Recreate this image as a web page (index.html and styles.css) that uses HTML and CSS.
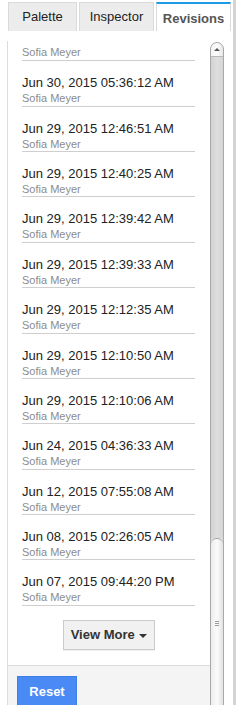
FILE: index.html
```html
<!DOCTYPE html>
<html lang="en">
<head>
	<meta charset="UTF-8">
	<meta name="viewport" content="width=device-width, initial-scale=1.0">
	<title>Revisions</title>
	<link rel="stylesheet" href="styles.css">
</head>
<body>

<div class="page">

	<!-- Sidebar tabs -->
	<div class="tabs">
		<div class="tab">Palette</div>
		<div class="tab">Inspector</div>
		<div class="tab active">Revisions</div>
	</div>

	<div class="main">
		<div class="panel">
			<div class="list">
				<!-- first entry is scrolled half out of view -->
				<div class="item item-cut">
					<div class="author">Sofia Meyer</div>
				</div>
				<div class="item">
					<div class="date">Jun 30, 2015 05:36:12 AM</div>
					<div class="author">Sofia Meyer</div>
				</div>
				<div class="item">
					<div class="date">Jun 29, 2015 12:46:51 AM</div>
					<div class="author">Sofia Meyer</div>
				</div>
				<div class="item">
					<div class="date">Jun 29, 2015 12:40:25 AM</div>
					<div class="author">Sofia Meyer</div>
				</div>
				<div class="item">
					<div class="date">Jun 29, 2015 12:39:42 AM</div>
					<div class="author">Sofia Meyer</div>
				</div>
				<div class="item">
					<div class="date">Jun 29, 2015 12:39:33 AM</div>
					<div class="author">Sofia Meyer</div>
				</div>
				<div class="item">
					<div class="date">Jun 29, 2015 12:12:35 AM</div>
					<div class="author">Sofia Meyer</div>
				</div>
				<div class="item">
					<div class="date">Jun 29, 2015 12:10:50 AM</div>
					<div class="author">Sofia Meyer</div>
				</div>
				<div class="item">
					<div class="date">Jun 29, 2015 12:10:06 AM</div>
					<div class="author">Sofia Meyer</div>
				</div>
				<div class="item">
					<div class="date">Jun 24, 2015 04:36:33 AM</div>
					<div class="author">Sofia Meyer</div>
				</div>
				<div class="item">
					<div class="date">Jun 12, 2015 07:55:08 AM</div>
					<div class="author">Sofia Meyer</div>
				</div>
				<div class="item">
					<div class="date">Jun 08, 2015 02:26:05 AM</div>
					<div class="author">Sofia Meyer</div>
				</div>
				<div class="item">
					<div class="date">Jun 07, 2015 09:44:20 PM</div>
					<div class="author">Sofia Meyer</div>
				</div>
			</div>

			<div class="more">
				<button class="more-btn">View More <span class="caret"></span></button>
			</div>

			<div class="footer">
				<button class="reset-btn">Reset</button>
			</div>
		</div>

		<!-- scrollbar of the panel -->
		<div class="scrollbar">
			<div class="scroll-up"><span class="arrow-up"></span></div>
			<div class="scroll-track"></div>
			<div class="scroll-thumb">
				<div class="grip"></div>
			</div>
		</div>
	</div>

</div>

</body>
</html>
```

FILE: styles.css
```css
	html, body {
		margin: 0;
		padding: 0;
		height: 705px;
		overflow: hidden;
		}

	body {
		background-color: white;
		font-family: "Liberation Sans", Arial, sans-serif;
		color: #222;
		}

	.page {
		width: 236px;
		height: 705px;
		box-sizing: border-box;
		border-right: 3px solid #d4d4d4; /* window edge */
		}

	.tabs {
		display: flex;
		gap: 2px;
		padding: 2px 0 0 8px;
		height: 31px;
		box-sizing: border-box;
		}

	.tab {
		width: 69px;
		height: 29px;
		box-sizing: border-box;
		background-color: #ececec;
		border: 1px solid #dadada;
		border-bottom: none;
		font-size: 13px;
		line-height: 27px;
		text-align: center;
		color: #222;
		}

	.tab:nth-child(2) {
		width: 75px;
		}

	.tab.active {
		width: 75px;
		background-color: white;
		border-top: 2px solid #1b9bea;
		font-weight: bold;
		color: #555;
		line-height: 29px;
		}

	.main {
		display: flex;
		margin: 10px 0 0 7px;
		}

	.panel {
		width: 203px;
		box-sizing: border-box;
		border-left: 1px solid #dcdcdc;
		}

	.list {
		padding: 0 15px 0 14px;
		}

	.item {
		padding: 13px 0 0.36px;
		border-bottom: 1px solid #cfcfcf;
		}

	.item-cut {
		padding-top: 4px;
		padding-bottom: 1.4px;
		}

	.date {
		font-size: 13px;
		line-height: 17px;
		color: #222;
		}

	.author {
		font-size: 11px;
		line-height: 14px;
		color: #8c8c8c;
		}

	.more {
		padding: 14px 0 15px;
		text-align: center;
		}

	.more-btn {
		width: 92px;
		height: 30px;
		background-color: #f1f1f1;
		border: 1px solid #cbcbcb;
		box-shadow: 0 1px 0 rgba(0, 0, 0, 0.06);
		font-family: inherit;
		font-size: 13px;
		font-weight: bold;
		color: #333;
		padding: 0;
		}

	.caret {
		display: inline-block;
		width: 0;
		height: 0;
		border-left: 4px solid transparent;
		border-right: 4px solid transparent;
		border-top: 4px solid #333;
		vertical-align: middle;
		margin-left: 1px;
		}

	.footer {
		background-color: #f4f4f4;
		border-top: 1px solid #dcdcdc;
		padding: 10px 9px;
		}

	.reset-btn {
		width: 60px;
		height: 32px;
		background-color: #4a8af4;
		border: 1px solid #3d7fe6;
		color: white;
		font-family: inherit;
		font-size: 13px;
		font-weight: bold;
		padding: 0;
		}

	.scrollbar {
		display: flex;
		flex-direction: column;
		width: 14px;
		height: 680px;
		margin-top: 1px;
		box-sizing: border-box;
		border: 1px solid #a9a9a9;
		border-radius: 7px 7px 0 0;
		background-color: #dcdcdc;
		overflow: hidden;
		}

	.scroll-up {
		height: 13px;
		flex: none;
		display: flex;
		align-items: center;
		justify-content: center;
		background: linear-gradient(to right, #f4f4f4, #fdfdfd, #e6e6e6);
		border-bottom: 1px solid #b9b9b9;
		border-radius: 6px 6px 0 0;
		}

	.arrow-up {
		width: 0;
		height: 0;
		border-left: 3px solid transparent;
		border-right: 3px solid transparent;
		border-bottom: 3px solid #555;
		}

	.scroll-track {
		flex: 0 0 481px;
		background: linear-gradient(to right, #d2d2d2, #dedede, #d6d6d6);
		}

	.scroll-thumb {
		flex: 1;
		border-top: 1px solid #a0a0a0;
		border-radius: 6px 6px 0 0;
		background: linear-gradient(to right, #ececec, #fbfbfb, #e2e2e2);
		padding-top: 82px;
		}

	.grip {
		width: 4px;
		height: 5px;
		margin: 0 auto;
		background: repeating-linear-gradient(#999 0, #999 1px, transparent 1px, transparent 2px);
		}
```
